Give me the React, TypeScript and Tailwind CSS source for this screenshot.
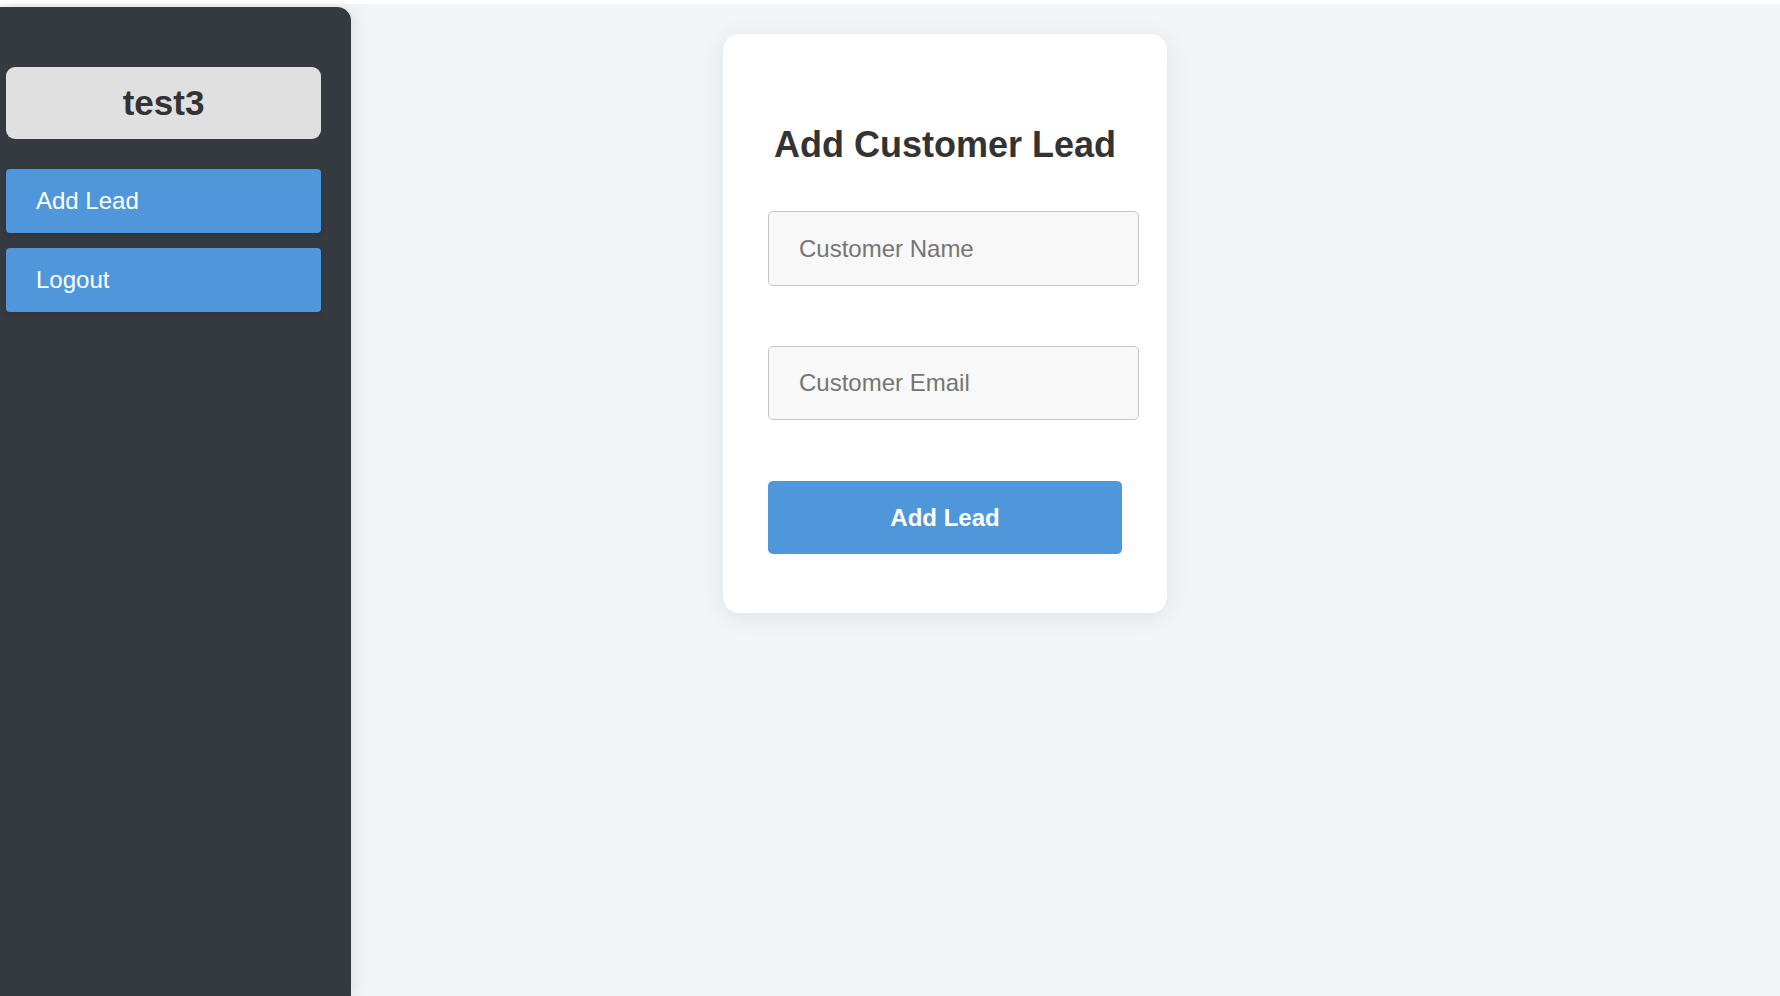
import React from 'react';

const font = { fontFamily: '"Liberation Sans", Arial, sans-serif' };

const Sidebar: React.FC = () => {
  return (
    <aside className="w-[351px] shrink-0 mt-[3px] bg-[#353a41] rounded-tr-[14px] shadow-[4px_0_14px_rgba(0,0,0,0.08)] pt-[60px] pl-[6px] pr-[30px] z-10">
      <div className="h-[72px] rounded-[9px] bg-[#e0e0e0] flex items-center justify-center">
        <span className="text-[35px] font-bold text-[#333333]">test3</span>
      </div>
      <nav className="mt-[30px] flex flex-col gap-[15px]">
        <button className="h-[64px] rounded-[4px] bg-[#4f97da] text-white text-[24px] text-left pl-[30px] shadow-[0_2px_4px_rgba(0,0,0,0.12)]">
          Add Lead
        </button>
        <button className="h-[64px] rounded-[4px] bg-[#4f97da] text-white text-[24px] text-left pl-[30px] shadow-[0_2px_4px_rgba(0,0,0,0.12)]">
          Logout
        </button>
      </nav>
    </aside>
  );
};

const LeadForm: React.FC = () => {
  return (
    <div className="w-[444px] mt-[30px] ml-[372px] bg-white rounded-[16px] shadow-[0_4px_24px_rgba(0,0,0,0.08)] pt-[90px] pb-[59px] px-[45px] self-start">
      <h2 className="text-[36px] leading-[41px] font-bold text-[#333333] text-center">Add Customer Lead</h2>
      <input
        className="block mt-[46px] w-[371px] h-[75px] rounded-[5px] border border-[#c4c4c4] bg-[#f8f8f8] pl-[30px] text-[24px] text-[#333] placeholder:text-[#757575] outline-none"
        placeholder="Customer Name"
      />
      <input
        className="block mt-[60px] w-[371px] h-[74px] rounded-[5px] border border-[#c4c4c4] bg-[#f8f8f8] pl-[30px] text-[24px] text-[#333] placeholder:text-[#757575] outline-none"
        placeholder="Customer Email"
      />
      <button className="block mt-[61px] w-[354px] h-[73px] rounded-[5px] bg-[#4f97da] text-white text-[24px] font-bold">
        Add Lead
      </button>
    </div>
  );
};

export default function App() {
  return (
    <div className="min-h-[996px] bg-white pt-[4px]" style={font}>
      <div className="flex min-h-[992px] bg-[#f2f5f8]">
        <Sidebar />
        <LeadForm />
      </div>
    </div>
  );
}
